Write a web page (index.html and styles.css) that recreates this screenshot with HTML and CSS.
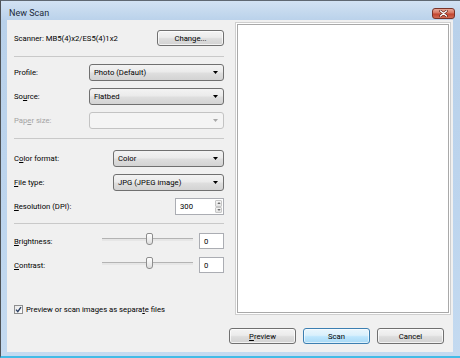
FILE: index.html
```html
<!DOCTYPE html>
<html>
<head>
<meta charset="utf-8">
<title>New Scan</title>
<link rel="stylesheet" href="styles.css">
</head>
<body>
<div class="window">
  <div class="titlebar">
    <span class="title">New Scan</span>
    <div class="close">
      <svg width="9" height="7" viewBox="0 0 9 7"><path d="M1.5 1 L7.5 6 M7.5 1 L1.5 6" stroke="#5a2016" stroke-width="2.6" stroke-linecap="round"/><path d="M1.5 1 L7.5 6 M7.5 1 L1.5 6" stroke="#ffffff" stroke-width="1.4" stroke-linecap="round"/></svg>
    </div>
  </div>
  <div class="client">
    <div class="left">
      <div class="row scanner">
        <span>Scanner: MB5(4)x2/ES5(4)1x2</span>
        <div class="btn change">Chan<u>g</u>e...</div>
      </div>
      <div class="sep sep1"></div>
      <div class="row field first">
        <span class="label">Prof<u>i</u>le:</span>
        <div class="combo wide"><span>Photo (Default)</span><svg class="arrow" width="5" height="3" viewBox="0 0 5 3"><path d="M0 0H5L2.5 3Z" fill="#000"/></svg></div>
      </div>
      <div class="row field">
        <span class="label">So<u>u</u>rce:</span>
        <div class="combo wide"><span>Flatbed</span><svg class="arrow" width="5" height="3" viewBox="0 0 5 3"><path d="M0 0H5L2.5 3Z" fill="#000"/></svg></div>
      </div>
      <div class="row field">
        <span class="label disabled">Pap<u>e</u>r size:</span>
        <div class="combo wide off end"><svg class="arrow" width="5" height="3" viewBox="0 0 5 3"><path d="M0 0H5L2.5 3Z" fill="#a8a8a8"/></svg></div>
      </div>
      <div class="sep sep2"></div>
      <div class="row field second">
        <span class="label">C<u>o</u>lor format:</span>
        <div class="combo narrow"><span>Color</span><svg class="arrow" width="5" height="3" viewBox="0 0 5 3"><path d="M0 0H5L2.5 3Z" fill="#000"/></svg></div>
      </div>
      <div class="row field">
        <span class="label"><u>F</u>ile type:</span>
        <div class="combo narrow"><span>JPG (JPEG image)</span><svg class="arrow" width="5" height="3" viewBox="0 0 5 3"><path d="M0 0H5L2.5 3Z" fill="#000"/></svg></div>
      </div>
      <div class="row field">
        <span class="label"><u>R</u>esolution (DPI):</span>
        <div class="spin">
          <div class="spin-input">300</div>
          <div class="spin-btns">
            <div class="spin-btn"><svg width="5" height="3" viewBox="0 0 5 3"><path d="M0 3H5L2.5 0Z" fill="#6b6b6b"/></svg></div>
            <div class="spin-btn"><svg width="5" height="3" viewBox="0 0 5 3"><path d="M0 0H5L2.5 3Z" fill="#6b6b6b"/></svg></div>
          </div>
        </div>
      </div>
      <div class="sep sep3"></div>
      <div class="row adjust first-adj">
        <span class="label"><u>B</u>rightness:</span>
        <div class="slider"><div class="thumb"></div></div>
        <div class="num">0</div>
      </div>
      <div class="row adjust">
        <span class="label"><u>C</u>ontrast:</span>
        <div class="slider"><div class="thumb"></div></div>
        <div class="num">0</div>
      </div>
      <div class="row check-row">
        <div class="checkbox"><svg width="7" height="7" viewBox="0 0 7 7"><path d="M1 3.6 L2.8 5.6 L6 1.2" stroke="#2b3f63" stroke-width="1.4" fill="none"/></svg></div>
        <span>Preview or scan images as separa<u>t</u>e files</span>
      </div>
    </div>
    <div class="preview"></div>
    <div class="actions">
      <div class="btn"><u>P</u>review</div>
      <div class="btn default">Scan</div>
      <div class="btn">Cancel</div>
    </div>
  </div>
</div>
</body>
</html>
```
FILE: styles.css
```css
* { box-sizing: border-box; }
html, body { margin: 0; padding: 0; }
body {
  width: 460px;
  height: 358px;
  overflow: hidden;
  font-family: Roboto, "Noto Sans", sans-serif;
  font-size: 7.7px;
  color: #000;
  background: #c3d9ef;
}
u { text-decoration: underline; text-underline-offset: 1px; }

.window {
  width: 460px;
  height: 358px;
  border-top: 1px solid #5f6872;
  border-left: 1px solid #4e5256;
  border-bottom: 2px solid #43bbe6;
  background: linear-gradient(180deg, #d2e2f3 0px, #b9d1ea 20px, #bdd5ee 60%, #c4daf0 100%);
  padding: 0 7px 4px 6px;
  display: flex;
  flex-direction: column;
}

.titlebar {
  height: 19px;
  display: flex;
  justify-content: space-between;
  align-items: flex-start;
  margin-right: -2px;
}
.title {
  padding: 7px 0 0 2px;
  font-size: 9px;
  line-height: 11px;
  color: #1c2a3a;
}
.close {
  margin-top: 7px;
  width: 23px;
  height: 11px;
  border: 1px solid #7a3328;
  border-radius: 3px;
  background: linear-gradient(180deg, #e8a999 0%, #d6735f 45%, #c2442f 55%, #cf6a53 100%);
  display: flex;
  align-items: center;
  justify-content: center;
}

.client {
  height: 332px;
  background: #f0f0f0;
  display: grid;
  grid-template-columns: 228px 1fr;
  grid-template-rows: 1fr auto;
}

.left {
  padding: 10px 11px 0 7px;
  display: flex;
  flex-direction: column;
}
.row { display: flex; align-items: center; }
.label { flex: 1; white-space: nowrap; }
.label.disabled { color: #a3a3a3; }

.scanner { height: 16px; justify-content: space-between; }

.btn {
  width: 67px;
  height: 16px;
  border: 1px solid #707070;
  border-radius: 3px;
  background: linear-gradient(180deg, #f4f4f4 0%, #ebebeb 45%, #dddddd 55%, #d2d2d2 100%);
  box-shadow: inset 0 0 0 1px rgba(255,255,255,0.7);
  display: flex;
  align-items: center;
  justify-content: center;
  color: #000;
}
.btn.default {
  border-color: #3c7fb1;
  background: linear-gradient(180deg, #eaf6fd 0%, #d9f0fc 45%, #bee6fd 55%, #a7d9f5 100%);
  box-shadow: inset 0 0 0 1px rgba(255,255,255,0.6);
}

.sep { height: 1px; background: #c9c9c9; }
.sep1 { margin-top: 10px; }
.sep2 { margin-top: 9px; }
.sep3 { margin-top: 8px; }

.field { height: 17px; margin-top: 7px; }
.field.first { margin-top: 7px; }
.field.second { margin-top: 11px; }

.combo {
  height: 17px;
  border: 1px solid #707070;
  border-radius: 3px;
  background: linear-gradient(180deg, #f3f3f3 0%, #ebebeb 45%, #dedede 55%, #d3d3d3 100%);
  display: flex;
  align-items: center;
  justify-content: space-between;
  padding: 0 5px 0 4px;
  color: #000;
}
.combo.end { justify-content: flex-end; }
.combo.wide { width: 135px; }
.combo.narrow { width: 111px; }
.combo.off {
  border-color: #c3c3c3;
  background: #f4f4f4;
}
.arrow { flex: none; }

.spin { display: flex; width: 49px; height: 17px; }
.spin-input {
  width: 40px;
  height: 17px;
  background: #fff;
  border: 1px solid #abadb3;
  border-right: none;
  padding-left: 4px;
  display: flex;
  align-items: center;
}
.spin-btns {
  width: 9px;
  height: 17px;
  display: flex;
  flex-direction: column;
  background: #fff;
  border: 1px solid #abadb3;
  border-left: none;
  padding: 1px 1px 1px 0;
}
.spin-btn {
  flex: 1;
  border: 1px solid #c7c7c7;
  border-radius: 1px;
  background: linear-gradient(180deg, #f5f5f5, #e3e3e3);
  display: flex;
  align-items: center;
  justify-content: center;
}
.spin-btn svg { width: 4px; height: 2px; }

.adjust { height: 16px; margin-top: 8px; }
.adjust.first-adj { margin-top: 9px; }
.slider {
  align-self: flex-start;
  width: 91px;
  height: 12px;
  margin-right: 6px;
  display: flex;
  background: linear-gradient(180deg, transparent 5px, #b3b3b3 5px, #b3b3b3 6px, #e6e6e6 6px, #e6e6e6 8px, transparent 8px);
}
.thumb {
  margin-left: 44px;
  width: 7px;
  height: 12px;
  border: 1px solid #8d8d8d;
  border-radius: 2px 2px 3px 3px;
  background: linear-gradient(180deg, #ffffff 0%, #ececec 60%, #dcdcdc 100%);
}
.num {
  width: 25px;
  height: 16px;
  background: #fff;
  border: 1px solid #abadb3;
  padding-left: 4px;
  display: flex;
  align-items: center;
}

.check-row { margin-top: 31px; height: 10px; gap: 3px; }
.checkbox {
  width: 9px;
  height: 9px;
  border: 1px solid #8f8f8f;
  background: linear-gradient(135deg, #e8e8e8, #fdfdfd);
  display: flex;
  align-items: center;
  justify-content: center;
}

.preview {
  margin: 2px 2px 0 0;
  background: #fff;
  border: 1px solid #cfcfcf;
  box-shadow: inset 0 0 0 1px #ffffff, inset 0 0 0 2px #a9a9a9;
}

.actions {
  grid-column: 1 / -1;
  display: flex;
  justify-content: flex-end;
  gap: 7px;
  padding: 13px 9px 8px 0;
}
```
